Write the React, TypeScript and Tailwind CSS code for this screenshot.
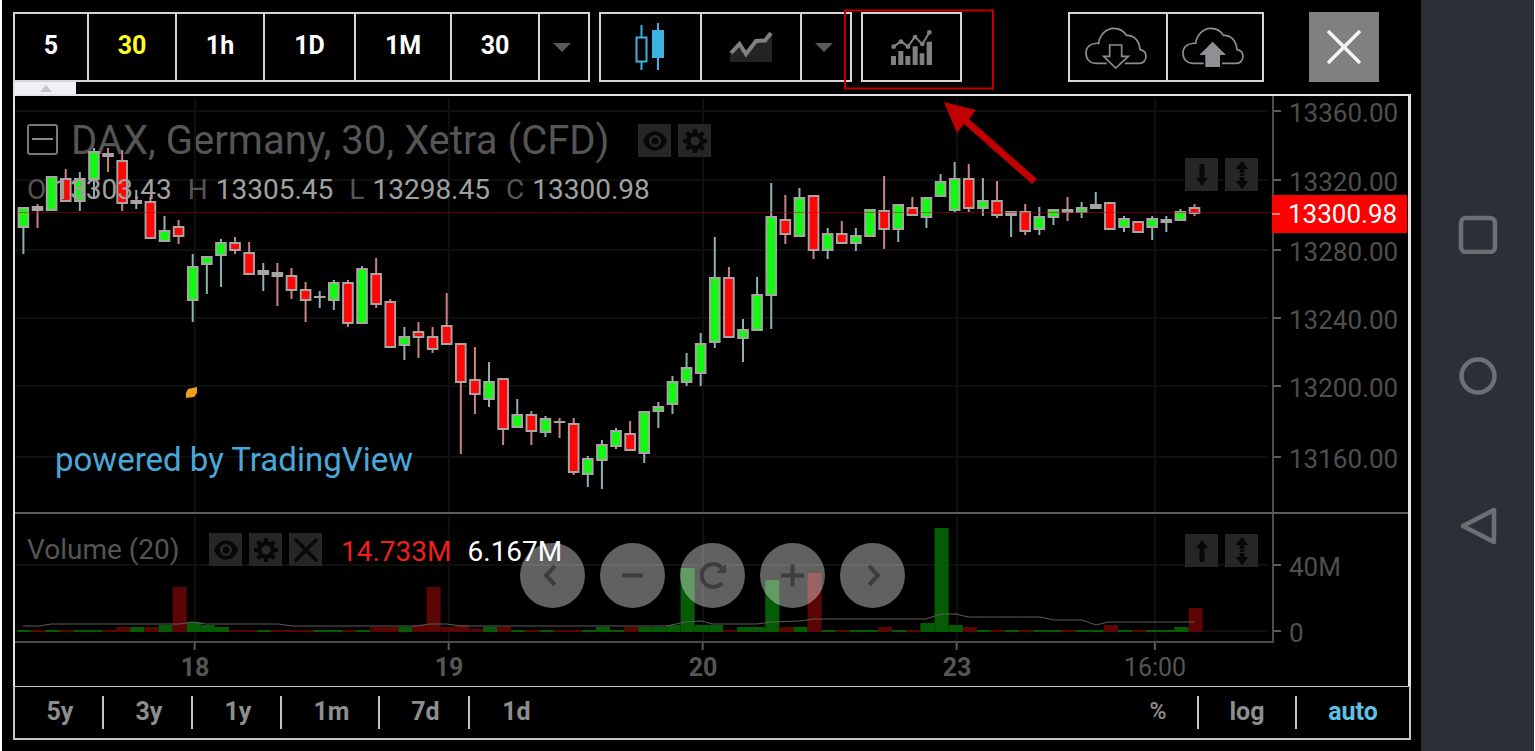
import { ReactNode } from 'react';
import clsx from 'clsx';

// [wick top, body top, body bottom, wick bottom, rising]
type Candle = [number, number, number, number, boolean];
// [top, rising]
type Volume = [number, boolean];

const PLOT_WIDTH = 1257;
const PRICE_TOP = 96;
const PRICE_HEIGHT = 416;
const VOLUME_TOP = 514;
const VOLUME_HEIGHT = 127;
const STEP = 14.11;
const FIRST_X = 8.4;

const candles: Candle[] = [
  [207, 207, 228, 254, true],
  [204, 206, 211, 228, false],
  [176, 176, 211, 211, true],
  [169, 178, 202, 202, false],
  [172, 178, 202, 211, true],
  [148, 151, 180, 199, true],
  [148, 153, 157, 172, false],
  [150, 160, 204, 211, false],
  [190, 200, 204, 209, true],
  [197, 201, 239, 239, false],
  [216, 230, 242, 242, true],
  [220, 226, 237, 244, false],
  [254, 266, 301, 322, true],
  [256, 256, 265, 294, true],
  [239, 242, 256, 287, true],
  [237, 242, 251, 254, false],
  [242, 252, 275, 275, false],
  [263, 270, 275, 291, true],
  [263, 272, 277, 306, false],
  [268, 275, 291, 299, false],
  [282, 289, 301, 322, false],
  [291, 296, 298, 308, true],
  [280, 282, 301, 310, true],
  [280, 282, 324, 327, false],
  [266, 268, 324, 324, true],
  [258, 273, 305, 308, false],
  [299, 301, 348, 348, false],
  [327, 336, 346, 360, true],
  [322, 331, 338, 358, false],
  [327, 336, 350, 353, false],
  [293, 325, 345, 345, false],
  [343, 343, 383, 454, false],
  [347, 379, 395, 414, false],
  [362, 381, 400, 407, true],
  [378, 378, 430, 445, false],
  [399, 414, 428, 428, true],
  [411, 414, 432, 445, false],
  [416, 418, 433, 437, true],
  [418, 421, 423, 438, false],
  [418, 423, 473, 475, false],
  [456, 458, 475, 487, true],
  [440, 444, 461, 489, true],
  [428, 430, 447, 449, true],
  [421, 433, 451, 451, false],
  [411, 411, 454, 463, true],
  [402, 406, 412, 428, true],
  [376, 381, 405, 414, true],
  [353, 367, 383, 386, true],
  [333, 343, 374, 386, true],
  [237, 277, 343, 348, true],
  [267, 277, 338, 338, false],
  [319, 329, 339, 362, true],
  [277, 294, 331, 331, true],
  [183, 216, 296, 329, true],
  [195, 219, 235, 244, false],
  [188, 197, 237, 237, true],
  [195, 195, 251, 259, false],
  [228, 233, 251, 259, true],
  [221, 233, 244, 244, false],
  [228, 235, 244, 251, true],
  [209, 209, 237, 237, true],
  [176, 210, 230, 249, false],
  [204, 204, 230, 242, true],
  [197, 207, 216, 216, false],
  [197, 197, 218, 228, true],
  [174, 181, 197, 197, true],
  [162, 178, 211, 212, true],
  [164, 178, 209, 212, false],
  [178, 200, 209, 216, true],
  [181, 200, 216, 218, false],
  [211, 211, 216, 237, true],
  [204, 211, 232, 235, false],
  [207, 216, 230, 235, true],
  [209, 209, 218, 225, true],
  [197, 209, 213, 221, false],
  [202, 207, 213, 218, true],
  [192, 204, 209, 209, true],
  [202, 202, 230, 230, false],
  [216, 218, 228, 232, true],
  [221, 221, 233, 233, false],
  [216, 218, 228, 240, true],
  [216, 219, 223, 232, true],
  [209, 211, 221, 221, true],
  [204, 207, 214, 216, false],
];

const volumes: Volume[] = [
  [630, true], [630, false], [630, true], [630, false], [630, true], [630, true],
  [630, false], [627, false], [627, true], [627, false], [625, true], [587, false],
  [622, true], [625, true], [627, true], [630, false], [630, false], [630, true],
  [630, false], [630, false], [630, false], [630, true], [630, true], [630, false],
  [630, true], [627, false], [627, false], [627, true], [625, false], [587, false],
  [627, false], [625, false], [629, false], [627, true], [627, false], [630, true],
  [630, false], [630, true], [630, false], [630, false], [630, true], [627, true],
  [630, true], [627, false], [627, true], [627, true], [625, true], [568, true],
  [625, true], [625, true], [630, false], [627, true], [627, true], [580, true],
  [627, false], [627, true], [573, false], [630, true], [630, false], [630, true],
  [630, true], [627, false], [630, true], [630, false], [623, true], [528, true],
  [625, true], [627, false], [630, true], [630, false], [630, true], [630, false],
  [630, true], [630, true], [630, false], [630, true], [630, true], [625, false],
  [630, true], [630, false], [630, true], [630, true], [627, true], [608, false],
];

const average =
  '8,112 24,112 36,110 165,110 177,108 191,110 263,110 277,112 401,112 415,110 432,110 446,112 652,112 670,108 687,107 697,110 742,110 756,108 785,107 798,105 911,105 926,100 941,100 953,103 1025,103 1039,106 1067,106 1081,111 1093,108 1180,108';

const times = [
  { label: '18', x: 180, bold: true },
  { label: '19', x: 434, bold: true },
  { label: '20', x: 688, bold: true },
  { label: '23', x: 942, bold: true },
  { label: '16:00', x: 1140, bold: false },
];

const prices = [
  { label: '13360.00', y: 15 },
  { label: '13320.00', y: 84 },
  { label: '13280.00', y: 154 },
  { label: '13240.00', y: 222 },
  { label: '13200.00', y: 290 },
  { label: '13160.00', y: 361 },
];

const volumeLabels = [
  { label: '40M', y: 51 },
  { label: '0', y: 117 },
];

const intervals = [
  { label: '5', width: 'w-[74px]' },
  { label: '30', width: 'w-[88px]', active: true },
  { label: '1h', width: 'w-[88px]' },
  { label: '1D', width: 'w-[91px]' },
  { label: '1M', width: 'w-[96px]' },
  { label: '30', width: 'w-[88px]' },
];

const ranges = [
  { label: '5y', width: 'w-[89px]' },
  { label: '3y', width: 'w-[89px]' },
  { label: '1y', width: 'w-[89px]' },
  { label: '1m', width: 'w-[98px]' },
  { label: '7d', width: 'w-[90px]' },
  { label: '1d', width: 'w-[90px]' },
];

const ohlc = [
  { label: 'O', value: '13303.43' },
  { label: 'H', value: '13305.45' },
  { label: 'L', value: '13298.45' },
  { label: 'C', value: '13300.98' },
];

function EyeIcon() {
  return (
    <svg viewBox="0 0 24 24" className="size-6">
      <path d="M0 12C3 5 7 2.500 12 2.500S21 5 24 12C21 19 17 21.500 12 21.500S3 19 0 12Z" fill="#080808" />
      <circle cx="12" cy="12" r="4.800" fill="none" stroke="#2a2a2a" strokeWidth="2.600" />
    </svg>
  );
}

function GearIcon() {
  return (
    <svg viewBox="0 0 24 24" className="size-6">
      <g fill="#080808">
        {[0, 45, 90, 135, 180, 225, 270, 315].map((angle) => (
          <rect key={angle} x="9.800" y="0" width="4.400" height="6" rx="1" transform={`rotate(${angle} 12 12)`} />
        ))}
        <circle cx="12" cy="12" r="8.800" />
      </g>
      <circle cx="12" cy="12" r="4.600" fill="#2a2a2a" />
    </svg>
  );
}

function CloseIcon() {
  return (
    <svg viewBox="0 0 24 24" className="size-6" stroke="#080808" strokeWidth="3.500" strokeLinecap="round">
      <path d="M2 2 22 22M22 2 2 22" />
    </svg>
  );
}

function ArrowIcon({ up }: { up?: boolean }) {
  return (
    <svg viewBox="0 0 24 24" className={clsx('size-6', up && 'rotate-180')} fill="#080808">
      <path d="M9.500 1H14.500V15H18L12 23 6 15H9.500Z" />
    </svg>
  );
}

function ResizeIcon() {
  return (
    <svg viewBox="0 0 24 30" className="h-[30px] w-6" fill="#080808">
      <path d="M12 1 18.500 9H14.500V13H9.500V9H5.500ZM12 29 18.500 21H14.500V17H9.500V21H5.500Z" />
      <path d="M10 14H14V16H10Z" />
    </svg>
  );
}

function SquareButton({ label, children }: { label: string; children: ReactNode }) {
  return (
    <button type="button" aria-label={label} className="flex size-[33px] items-center justify-center bg-[#262626]">
      {children}
    </button>
  );
}

function CloudIcon({ up }: { up?: boolean }) {
  return (
    <svg viewBox="140 78 186 132" className="h-11 w-[62px]" fill="none" stroke="#8e8e8e" strokeWidth="5">
      <path d="M205 193H172C155 193 143 181 143 162C143 144 158 131 181 133C184 108 204 88 226 88C244 88 257 97 264 109C290 108 303 128 305 152C316 154 323 162 323 172C323 184 314 193 304 193H260" />
      {up ? (
        <path d="M232 128 272 168H254V204H210V168H192Z" fill="#8e9094" stroke="none" />
      ) : (
        <path d="M214 138H250V172H270L232 207 196 172H214Z" />
      )}
    </svg>
  );
}

function Caret() {
  return (
    <svg viewBox="0 0 18 9" className="h-[9px] w-[18px]">
      <path d="M0 0H18L9 9Z" fill="#5a5a5a" />
    </svg>
  );
}

function Toolbar() {
  return (
    <header className="flex justify-between">
      <div className="flex gap-[9px]">
        <div className="flex h-[70px] border-2 border-[#d6d6d6]">
          {intervals.map((item, i) => (
            <button
              key={i}
              type="button"
              className={clsx(
                'border-r-2 border-[#d6d6d6] pb-[2px] text-[25px] font-bold',
                item.width,
                item.active ? 'text-[#ffff1e]' : 'text-white',
              )}
            >
              {item.label}
            </button>
          ))}
          <button type="button" aria-label="More intervals" className="flex w-12 items-center justify-center pr-1">
            <Caret />
          </button>
        </div>

        <div className="flex h-[70px] border-2 border-[#d6d6d6]">
          <button type="button" aria-label="Candles" className="flex w-[101px] items-center justify-center border-r-2 border-[#d6d6d6]">
            <svg viewBox="1 0 32 48" className="h-12 w-8">
              <path d="M7.500 2V14M7.500 39V47M2.500 14.500H12.500V38.500H2.500Z" fill="none" stroke="#3fb2e4" strokeWidth="2" />
              <path d="M24 0V47" stroke="#3fb2e4" strokeWidth="2" />
              <path d="M18 7H30V35H18Z" fill="#3fb2e4" />
            </svg>
          </button>
          <button type="button" aria-label="Area" className="flex w-[100px] items-center justify-center border-r-2 border-[#d6d6d6]">
            <svg viewBox="0 0 44 32" className="h-8 w-11">
              <path d="M1 22 10.500 13 17 23 27 9.500 36 9 43 3V31H1Z" fill="#242424" />
              <path d="M2 22 10.500 13 17 23 27 10 36 9.500 42 2" fill="none" stroke="#808080" strokeWidth="4" />
            </svg>
          </button>
          <button type="button" aria-label="More chart types" className="flex w-12 items-center justify-center pr-1">
            <Caret />
          </button>
        </div>

        <div className="relative">
          <button type="button" aria-label="Indicators" className="flex h-[70px] w-[101px] items-center justify-center border-2 border-[#d6d6d6]">
            <svg viewBox="812 59 129 108" className="h-9 w-[43px]" fill="#808080">
              <path d="M815 140H830V167H815ZM837 125H852V167H837ZM858 140H873V167H858ZM880 111H895V167H880ZM901 132H915V167H901ZM922 97H938V167H922Z" />
              <path d="M823 112 845 96 866 112 887 82 909 105 930 69" fill="none" stroke="#808080" strokeWidth="6" />
              <circle cx="823" cy="112" r="7" />
              <circle cx="845" cy="97" r="7" />
              <circle cx="866" cy="112" r="7" />
              <circle cx="887" cy="83" r="7" />
              <circle cx="909" cy="104" r="7" />
              <circle cx="930" cy="69" r="7" />
            </svg>
          </button>
          {/* callout pointing at the indicators button */}
          <svg viewBox="0 0 200 180" className="pointer-events-none absolute -top-1 -left-[18px] z-20 h-[180px] w-[200px]" fill="#c00000">
            <path d="M2 2.500H150V80.500H2Z" fill="none" stroke="#c00000" strokeWidth="2" />
            <path d="M101 94 133 102 126 111 194 171 189 176 121 116 114 125Z" />
          </svg>
        </div>
      </div>

      <div className="flex gap-[45px] pr-8">
        <div className="flex h-[70px] border-2 border-[#d6d6d6]">
          <button type="button" aria-label="Load chart" className="flex w-[98px] items-center justify-center border-r-2 border-[#d6d6d6] pr-1">
            <CloudIcon />
          </button>
          <button type="button" aria-label="Save chart" className="flex w-[94px] items-center justify-center pr-1">
            <CloudIcon up />
          </button>
        </div>
        <button type="button" aria-label="Close" className="flex size-[70px] items-center justify-center bg-[#808080]">
          <svg viewBox="0 0 34 34" className="size-[34px]" stroke="#f4f4f4" strokeWidth="3.500">
            <path d="M1 1 33 33M33 1 1 33" />
          </svg>
        </button>
      </div>
    </header>
  );
}

function GridLines({ height, rows }: { height: number; rows: number[] }) {
  return (
    <g stroke="#0f0f0f" strokeWidth="2">
      {times.map((t) => (
        <path key={t.x} d={`M${t.x} 2V${height}`} />
      ))}
      {rows.map((y) => (
        <path key={y} d={`M0 ${y}H${PLOT_WIDTH - 4}`} />
      ))}
    </g>
  );
}

function CandleShape({ candle, index }: { candle: Candle; index: number }) {
  const [high, top, bottom, low, rising] = candle;
  const x = FIRST_X + index * STEP;
  const flat = bottom - top < 6;
  return (
    <g>
      <path
        d={`M${x} ${high - PRICE_TOP}V${low - PRICE_TOP}`}
        stroke={rising ? '#8fb0b4' : '#c98286'}
        strokeWidth="2"
      />
      <rect x={x - 5.8} y={top - PRICE_TOP} width="11.600" height={bottom - top} fill="#a9a5a3" />
      {!flat && (
        <rect
          x={x - 3.9}
          y={top - PRICE_TOP + 2}
          width="7.800"
          height={bottom - top - 4}
          fill={rising ? '#14f914' : '#ff0505'}
        />
      )}
    </g>
  );
}

function PricePane() {
  return (
    <section className="flex border-b-2 border-[#5c5c5c]">
      <div className="relative h-[416px] min-w-0 flex-1 border-r-2 border-[#4c4c4c]">
        <div className="absolute top-5 left-3 flex items-center text-[40px] text-[#555]">
          <button type="button" aria-label="Collapse legend" className="mb-1 flex size-[31px] items-center justify-center rounded-[3px] border-2 border-[#777]">
            <span className="h-[2px] w-[21px] bg-[#888]" />
          </button>
          <h1 className="ml-[13px] leading-[50px]">DAX, Germany, 30, Xetra (CFD)</h1>
        </div>

        <svg viewBox={`0 0 ${PLOT_WIDTH} ${PRICE_HEIGHT}`} preserveAspectRatio="none" className="absolute inset-0 size-full">
          <GridLines height={PRICE_HEIGHT} rows={prices.map((p) => p.y)} />
          {candles.map((candle, i) => (
            <CandleShape key={i} candle={candle} index={i} />
          ))}
          <path d={`M0 116.500H${PLOT_WIDTH}`} stroke="#c00000" strokeOpacity="0.500" />
          <path d="M173 293 182 291V297L179 301 171 302V297Z" fill="#f0a020" />
        </svg>

        <dl className="absolute top-[76px] left-3 flex gap-4 text-[28px] leading-9">
          {ohlc.map((item) => (
            <div key={item.label} className="flex gap-2 text-[#a0a0a0]">
              <dt className="text-[#555]">{item.label}</dt>
              <dd>{item.value}</dd>
            </div>
          ))}
        </dl>

        <div className="absolute top-7 left-[623px] flex gap-[7px]">
          <SquareButton label="Hide series"><EyeIcon /></SquareButton>
          <SquareButton label="Series settings"><GearIcon /></SquareButton>
        </div>
        <div className="absolute top-[62px] right-[14px] flex gap-[7px]">
          <SquareButton label="Move pane down"><ArrowIcon /></SquareButton>
          <SquareButton label="Maximize pane"><ResizeIcon /></SquareButton>
        </div>

        <a href="#" className="absolute bottom-8 left-10 text-[33px] leading-10 text-[#4aa8d8]">
          powered by TradingView
        </a>
      </div>

      <div className="relative w-[134px] text-[26px] text-[#4f4f4f]">
        {prices.map((p) => (
          <AxisLabel key={p.label} label={p.label} y={p.y} />
        ))}
        <div className="absolute top-[99px] -left-[2px] flex h-[38px] w-[135px] items-center bg-[#ff0000] text-white">
          <span className="h-[2px] w-2 bg-[#ff8080]" />
          <span className="ml-2">13300.98</span>
        </div>
      </div>
    </section>
  );
}

function AxisLabel({ label, y }: { label: string; y: number }) {
  return (
    <div className="absolute left-0 flex h-8 -translate-y-1/2 items-center" style={{ top: y }}>
      <span className="h-[2px] w-[7px] bg-[#5c5c5c]" />
      <span className="ml-2 pt-1">{label}</span>
    </div>
  );
}

const controls = [
  { label: 'Scroll left', path: 'M18 9 9 18.500 18 28' },
  { label: 'Zoom out', path: 'M5 18.500H26' },
  { label: 'Reset chart', path: 'M25 11A11.500 11.500 0 1 0 25 26' },
  { label: 'Zoom in', path: 'M4 18.500H27M15.500 7.500V29.500' },
  { label: 'Scroll right', path: 'M12 9 21 18.500 12 28' },
];

function VolumePane() {
  return (
    <section className="flex">
      <div className="relative h-[129px] min-w-0 flex-1 border-r-2 border-b-2 border-[#4c4c4c]">
        <svg viewBox={`0 0 ${PLOT_WIDTH} ${VOLUME_HEIGHT}`} preserveAspectRatio="none" className="absolute inset-0 size-full">
          <GridLines height={VOLUME_HEIGHT} rows={[51, 117]} />
          {volumes.map(([top, rising], i) => (
            <rect
              key={i}
              x={FIRST_X + i * STEP - 6}
              y={top - VOLUME_TOP}
              width={STEP}
              height={632 - top}
              fill={rising ? '#055c05' : '#5c0505'}
            />
          ))}
          <polyline points={average} fill="none" stroke="#5c5c5c" />
        </svg>

        <div className="absolute top-[19px] left-3 flex text-[28px] text-[#555]">
          <h2 className="w-[182px] leading-[34px]">Volume (20)</h2>
          <div className="flex gap-[7px]">
            <SquareButton label="Hide volume"><EyeIcon /></SquareButton>
            <SquareButton label="Volume settings"><GearIcon /></SquareButton>
            <SquareButton label="Remove volume"><CloseIcon /></SquareButton>
          </div>
        </div>

        {/* navigation controls float over the bars */}
        <div className="absolute top-[29px] left-[505px] flex gap-[15px]">
          {controls.map((c) => (
            <button
              key={c.label}
              type="button"
              aria-label={c.label}
              className="flex size-[65px] items-center justify-center rounded-full bg-white/[0.380]"
            >
              <svg viewBox="0 0 32 37" className="h-[37px] w-8" fill="none" stroke="#3e3e3e" strokeWidth="4">
                <path d={c.path} />
                {c.label === 'Reset chart' && <path d="M29 7V16H19Z" fill="#3e3e3e" stroke="none" />}
              </svg>
            </button>
          ))}
        </div>

        <div className="absolute top-5 left-[326px] flex gap-4 text-[28px] leading-9">
          <span className="text-[#f01e1e]">14.733M</span>
          <span className="text-white">6.167M</span>
        </div>

        <div className="absolute top-5 right-[14px] flex gap-[7px]">
          <SquareButton label="Move pane up"><ArrowIcon up /></SquareButton>
          <SquareButton label="Maximize volume"><ResizeIcon /></SquareButton>
        </div>
      </div>

      <div className="relative w-[134px] text-[26px] text-[#4f4f4f]">
        {volumeLabels.map((v) => (
          <AxisLabel key={v.label} label={v.label} y={v.y} />
        ))}
      </div>
    </section>
  );
}

function TimeAxis() {
  return (
    <div className="pr-[136px]">
      <div className="relative h-[43px] text-[25px] text-[#555]">
        {times.map((t) => (
          <div
            key={t.label}
            className="absolute top-0 flex -translate-x-1/2 flex-col items-center"
            style={{ left: `${(t.x / PLOT_WIDTH) * 100}%` }}
          >
            <span className="h-[7px] w-[2px] bg-[#5c5c5c]" />
            <span className={clsx('leading-9', t.bold && 'font-bold')}>{t.label}</span>
          </div>
        ))}
      </div>
    </div>
  );
}

function Divider() {
  return <span className="h-[33px] w-[2px] bg-[#c4c4c4]" />;
}

function RangeBar() {
  return (
    <footer className="flex h-[51px] items-center justify-between text-[25px] font-bold text-[#8e8e8e]">
      <div className="flex items-center">
        {ranges.map((r, i) => (
          <div key={r.label} className={clsx('flex items-center', r.width)}>
            <button type="button" className="flex-1 pb-[2px] pl-[3px]">{r.label}</button>
            {i < ranges.length - 1 && <Divider />}
          </div>
        ))}
      </div>
      <div className="flex items-center">
        <button type="button" className="w-[78px] text-[23px] font-medium">%</button>
        <Divider />
        <button type="button" className="w-[96px] pb-[2px]">log</button>
        <Divider />
        <button type="button" className="w-[112px] pb-[2px] text-[#5fc0e6]">auto</button>
      </div>
    </footer>
  );
}

function SystemNav() {
  return (
    <nav className="flex w-[113px] shrink-0 flex-col items-center justify-center gap-[97px] bg-[#2b3038] text-[#6c7074]">
      <button type="button" aria-label="Recent apps">
        <svg viewBox="0 0 40 50" className="h-[50px] w-10" fill="none" stroke="currentColor" strokeWidth="4.500">
          <rect x="3" y="14" width="34" height="34" rx="5" />
        </svg>
      </button>
      <button type="button" aria-label="Home">
        <svg viewBox="0 0 40 50" className="h-[50px] w-10" fill="none" stroke="currentColor" strokeWidth="4.500">
          <circle cx="20" cy="25" r="16.500" />
        </svg>
      </button>
      <button type="button" aria-label="Back">
        <svg viewBox="0 0 40 50" className="h-[50px] w-10" fill="none" stroke="currentColor" strokeWidth="4.500" strokeLinejoin="round">
          <path d="M36 12V44L5 28Z" />
        </svg>
      </button>
    </nav>
  );
}

export default function App() {
  return (
    <div className="flex min-h-screen border-r border-l-2 border-r-white border-l-white bg-black font-[Roboto,sans-serif]">
      <main className="min-w-0 flex-1 pt-3 pr-[10px] pb-[11px] pl-[11px]">
        <Toolbar />
        <div className="h-3 border-l-2 border-[#e4e4e4]">
          <button type="button" aria-label="Hide toolbar" className="flex h-3 w-[61px] items-center justify-center bg-[#eef0f4]">
            <svg viewBox="0 0 12 7" className="h-[7px] w-3">
              <path d="M6 0 12 7H0Z" fill="#c4c4c4" />
            </svg>
          </button>
        </div>
        <div className="border-t-2 border-r-[3px] border-l-2 border-[#e4e4e4]">
          <PricePane />
          <VolumePane />
          <TimeAxis />
        </div>
        <div className="border-t border-r-2 border-b-2 border-l-2 border-[#c4c4c4]">
          <RangeBar />
        </div>
      </main>
      <SystemNav />
    </div>
  );
}
